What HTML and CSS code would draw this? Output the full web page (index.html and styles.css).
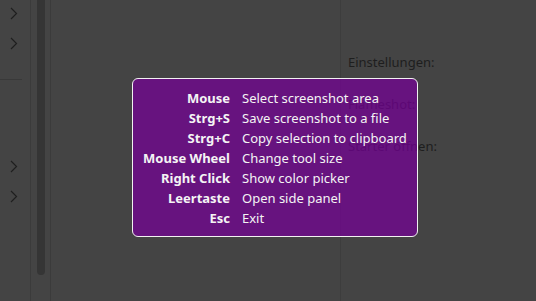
FILE: index.html
```html
<!DOCTYPE html>
<html lang="en">
<head>
    <meta charset="UTF-8">
    <title>Flameshot Help</title>
    <link rel="stylesheet" href="styles.css">
</head>
<body>
    <div class="window">
        <div class="sidebar">
            <div class="chev-group top">
                <div class="chev"><svg width="8" height="13" viewBox="0 0 8 13"><path d="M1 1 L6.5 6.5 L1 12" fill="none" stroke="#1f1f1f" stroke-width="1.2"/></svg></div>
                <div class="chev"><svg width="8" height="13" viewBox="0 0 8 13"><path d="M1 1 L6.5 6.5 L1 12" fill="none" stroke="#1f1f1f" stroke-width="1.2"/></svg></div>
            </div>
            <div class="divider"></div>
            <div class="chev-group bottom">
                <div class="chev"><svg width="8" height="13" viewBox="0 0 8 13"><path d="M1 1 L6.5 6.5 L1 12" fill="none" stroke="#1f1f1f" stroke-width="1.2"/></svg></div>
                <div class="chev"><svg width="8" height="13" viewBox="0 0 8 13"><path d="M1 1 L6.5 6.5 L1 12" fill="none" stroke="#1f1f1f" stroke-width="1.2"/></svg></div>
            </div>
        </div>
        <div class="scroll-col">
            <div class="scroll-handle"></div>
        </div>
        <div class="main"></div>
        <div class="settings">
            <p>Einstellungen:</p>
            <p>Flameshot:</p>
            <p>Starter öffnen:</p>
        </div>
    </div>

    <div class="help">
        <div class="key">Mouse</div><div class="desc">Select screenshot area</div>
        <div class="key">Strg+S</div><div class="desc">Save screenshot to a file</div>
        <div class="key">Strg+C</div><div class="desc">Copy selection to clipboard</div>
        <div class="key">Mouse Wheel</div><div class="desc">Change tool size</div>
        <div class="key">Right Click</div><div class="desc">Show color picker</div>
        <div class="key">Leertaste</div><div class="desc">Open side panel</div>
        <div class="key">Esc</div><div class="desc">Exit</div>
    </div>
</body>
</html>
```

FILE: styles.css
```css
body {
    margin: 0;
    background-color: #444444;
    font-family: "Noto Sans", sans-serif;
    font-size: 13px;
    overflow: hidden;
}

.window {
    display: flex;
    height: 301px;
}

.sidebar {
    width: 30px;
    border-right: 1px solid #3b3b3b;
}
.chev-group.top {
    padding-top: 7px;
}
.chev-group.bottom {
    padding-top: 80px;
}
.chev {
    height: 30px;
    padding-left: 10px;
}
.chev svg {
    display: block;
}
.divider {
    height: 1px;
    width: 22px;
    background: #393939;
    margin-top: 12px;
}

.scroll-col {
    width: 19px;
    border-right: 1px solid #3b3b3b;
    padding-left: 6px;
    box-sizing: border-box;
    width: 20px;
}
.scroll-handle {
    width: 8px;
    height: 275px;
    background: #353535;
    border-radius: 0 0 4px 4px;
}

.main {
    width: 289px;
    border-right: 1px solid #3d3d3d;
}

.settings {
    padding-left: 7px;
    padding-top: 53px;
    color: #1e1e1e;
}
.settings p {
    margin: 0 0 24px;
    line-height: 18px;
}

.help {
    position: absolute;
    left: 132px;
    top: 78px;
    width: 286px;
    height: 159px;
    box-sizing: border-box;
    border: 1.5px solid #f2f2f2;
    border-radius: 6px;
    background: rgba(116, 0, 150, 0.72);
    display: grid;
    grid-template-columns: 97px auto;
    column-gap: 12px;
    align-content: start;
    padding-top: 9px;
    color: #f4f4f4;
    line-height: 20px;
}
.key {
    text-align: right;
    font-weight: bold;
}
```
